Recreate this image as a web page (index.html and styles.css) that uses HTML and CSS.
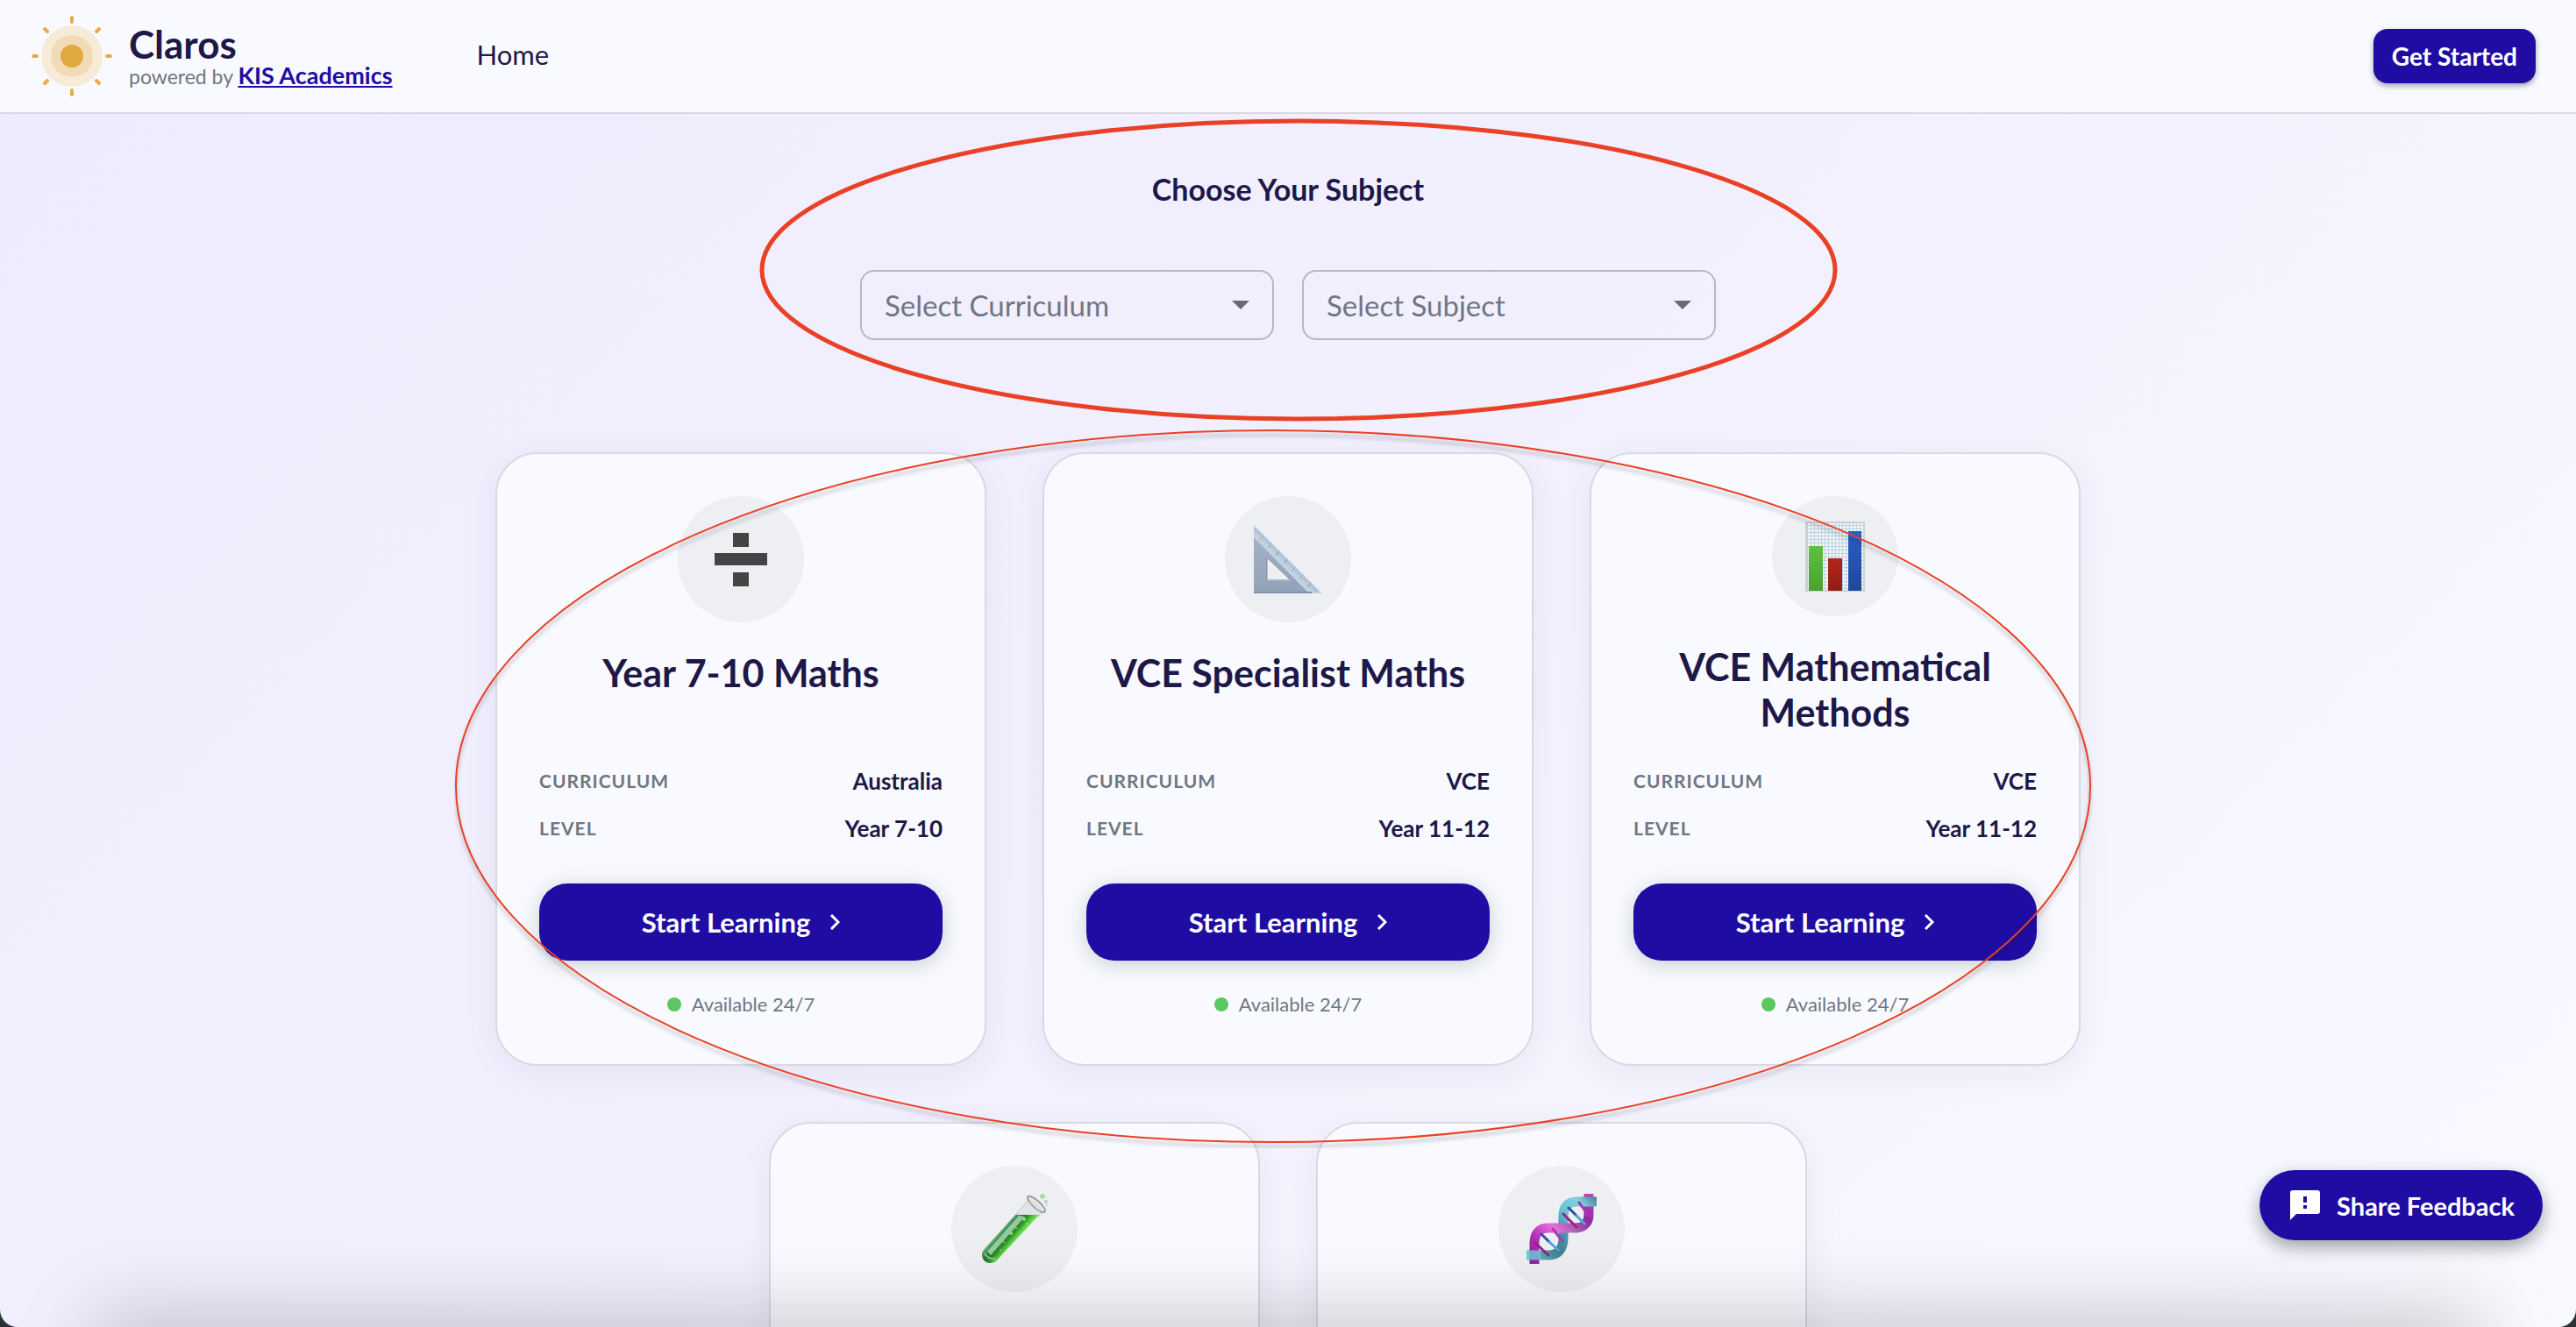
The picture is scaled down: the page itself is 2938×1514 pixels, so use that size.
FILE: index.html
```html
<!DOCTYPE html>
<html lang="en">
<head>
    <meta charset="UTF-8">
    <meta name="viewport" content="width=device-width, initial-scale=1.0">
    <title>Claros</title>
    <link rel="stylesheet" href="styles.css">
</head>
<body>
    <div class="app">
        <header class="header">
            <svg class="logo" viewBox="0 0 94 94" aria-hidden="true">
                <circle cx="47" cy="47" r="35" fill="#f6ebd8"/>
                <circle cx="47" cy="47" r="24" fill="#f3dbb8"/>
                <circle cx="47" cy="47" r="13" fill="#e2a840"/>
                <g stroke="#e6ac48" stroke-width="4" stroke-linecap="round">
                    <path d="M47 3v5M47 86v5M3 47h4M87 47h4M16 16l3 3M75 75l3 3M78 16l-3 3M19 75l-3 3"/>
                </g>
            </svg>
            <div class="brand">
                <div class="brand-name">Claros</div>
                <div class="brand-sub">powered by <a href="#">KIS Academics</a></div>
            </div>
            <nav class="nav">
                <a href="#">Home</a>
            </nav>
            <button class="btn btn-header">Get Started</button>
        </header>

        <main class="main">
            <section class="chooser">
                <h1>Choose Your Subject</h1>
                <div class="selects">
                    <div class="select">
                        <select aria-label="Select Curriculum">
                            <option>Select Curriculum</option>
                        </select>
                        <svg class="arrow" viewBox="0 0 20 10" aria-hidden="true"><path d="M0 0h20L10 10z" fill="#6b6a72"/></svg>
                    </div>
                    <div class="select">
                        <select aria-label="Select Subject">
                            <option>Select Subject</option>
                        </select>
                        <svg class="arrow" viewBox="0 0 20 10" aria-hidden="true"><path d="M0 0h20L10 10z" fill="#6b6a72"/></svg>
                    </div>
                </div>
            </section>

            <section class="cards">
                <article class="card">
                    <div class="card-top">
                        <div class="icon">
                            <svg viewBox="0 0 80 80" aria-hidden="true">
                                <path d="M10 33h60v14H10zM31 10h18v16H31zM31 55h18v16H31z" fill="#444"/>
                            </svg>
                        </div>
                        <h2>Year 7-10 Maths</h2>
                    </div>
                    <dl class="details">
                        <div><dt>Curriculum</dt><dd>Australia</dd></div>
                        <div><dt>Level</dt><dd>Year 7-10</dd></div>
                    </dl>
                    <button class="btn btn-start">Start Learning
                        <svg viewBox="0 0 12 18" aria-hidden="true"><path d="M2 1l8 8-8 8" fill="none" stroke="#fff" stroke-width="3"/></svg>
                    </button>
                    <p class="status">Available 24/7</p>
                </article>

                <article class="card">
                    <div class="card-top">
                        <div class="icon">
                            <svg viewBox="0 0 80 80" aria-hidden="true">
                                <defs>
                                    <linearGradient id="ruler" x1="0" y1="0" x2="0" y2="1">
                                        <stop offset="0" stop-color="#a6b3c4"/>
                                        <stop offset="1" stop-color="#92a2ba"/>
                                    </linearGradient>
                                </defs>
                                <path fill-rule="evenodd" d="M1 12v67h66zM16 38l26 25H16z" fill="url(#ruler)"/>
                                <path d="M1 1v14l60 61 5 3h13z" fill="#c3d2e2"/>
                                <path d="M2 6l71 71" stroke="#94a9c0" stroke-width="4" stroke-dasharray="1 2"/>
                                <path d="M12 13l-4 5M21 22l-4 5M30 31l-4 5M39 40l-4 5M48 49l-4 5M57 58l-4 5M66 67l-4 5" stroke="#8ea3bb"/>
                                <path d="M16 63V38l26 25" fill="none" stroke="#7d8ca3"/>
                                <path d="M16 64h27" stroke="#b9c5d4"/>
                                <path d="M1 78h66" stroke="#7f90a8" stroke-width="2"/>
                            </svg>
                        </div>
                        <h2>VCE Specialist Maths</h2>
                    </div>
                    <dl class="details">
                        <div><dt>Curriculum</dt><dd>VCE</dd></div>
                        <div><dt>Level</dt><dd>Year 11-12</dd></div>
                    </dl>
                    <button class="btn btn-start">Start Learning
                        <svg viewBox="0 0 12 18" aria-hidden="true"><path d="M2 1l8 8-8 8" fill="none" stroke="#fff" stroke-width="3"/></svg>
                    </button>
                    <p class="status">Available 24/7</p>
                </article>

                <article class="card">
                    <div class="card-top">
                        <div class="icon">
                            <svg viewBox="0 0 80 80" aria-hidden="true">
                                <defs>
                                    <pattern id="grid" width="4" height="4" patternUnits="userSpaceOnUse">
                                        <rect width="4" height="4" fill="#f3f5f6"/>
                                        <path d="M0 0h4M0 0v4" stroke="#b9d3e6" stroke-width="2"/>
                                    </pattern>
                                    <linearGradient id="green" x1="0" y1="0" x2="0" y2="1">
                                        <stop offset="0" stop-color="#5cc141"/><stop offset="1" stop-color="#4aa132"/>
                                    </linearGradient>
                                    <linearGradient id="red" x1="0" y1="0" x2="0" y2="1">
                                        <stop offset="0" stop-color="#b3251a"/><stop offset="1" stop-color="#911d13"/>
                                    </linearGradient>
                                    <linearGradient id="blue" x1="0" y1="0" x2="0" y2="1">
                                        <stop offset="0" stop-color="#275fc8"/><stop offset="1" stop-color="#20479a"/>
                                    </linearGradient>
                                </defs>
                                <rect x="6" width="68" height="80" fill="url(#grid)"/>
                                <rect x="7" y="1" width="66" height="78" fill="none" stroke="#cfd1d4" stroke-width="2"/>
                                <rect x="10" y="28" width="16" height="51" fill="url(#green)"/>
                                <rect x="32" y="42" width="16" height="37" fill="url(#red)"/>
                                <rect x="55" y="11" width="15" height="68" fill="url(#blue)"/>
                            </svg>
                        </div>
                        <h2>VCE Mathematical Methods</h2>
                    </div>
                    <dl class="details">
                        <div><dt>Curriculum</dt><dd>VCE</dd></div>
                        <div><dt>Level</dt><dd>Year 11-12</dd></div>
                    </dl>
                    <button class="btn btn-start">Start Learning
                        <svg viewBox="0 0 12 18" aria-hidden="true"><path d="M2 1l8 8-8 8" fill="none" stroke="#fff" stroke-width="3"/></svg>
                    </button>
                    <p class="status">Available 24/7</p>
                </article>

                <article class="card">
                    <div class="card-top">
                        <div class="icon">
                            <svg viewBox="0 0 80 80" aria-hidden="true">
                                <defs>
                                    <linearGradient id="liquid" gradientUnits="userSpaceOnUse" x1="31" y1="35" x2="45" y2="47">
                                        <stop offset="0" stop-color="#5fae74"/>
                                        <stop offset="0.35" stop-color="#256f2a"/>
                                        <stop offset="0.65" stop-color="#2f8a28"/>
                                        <stop offset="1" stop-color="#62dc45"/>
                                    </linearGradient>
                                </defs>
                                <!-- glass -->
                                <path d="M12 70L50 28" stroke="#3c6f4c" stroke-width="18" stroke-linecap="round"/>
                                <path d="M41 25L55 7l18 14-5 5z" fill="#e1e4e6"/>
                                <path d="M55 8L41 24M72 20L67 26" stroke="#c2c6c9"/>
                                <!-- liquid -->
                                <path d="M41 24h27L19 77c-9 6-20-4-14-13z" fill="url(#liquid)"/>
                                <path d="M45 25L9 66l4 4L52 26z" fill="#c4ecd0" opacity="0.7"/>
                                <path d="M6 68c3 5 8 7 13 6" fill="none" stroke="#7ccf92" stroke-width="2"/>
                                <ellipse cx="65" cy="12" rx="13" ry="4" transform="rotate(42 65 12)" fill="#e8eaeb" stroke="#9b9fa1" stroke-width="2"/>
                                <ellipse cx="64" cy="13" rx="9" ry="2" transform="rotate(42 64 13)" fill="#d7e2d8"/>
                                <g fill="#7fe07a">
                                    <circle cx="51" cy="29" r="2"/><circle cx="36" cy="45" r="2"/><circle cx="42" cy="39" r="1"/>
                                    <circle cx="28" cy="55" r="1"/><circle cx="17" cy="62" r="2"/><circle cx="24" cy="64" r="1"/><circle cx="54" cy="34" r="1"/>
                                </g>
                                <g fill="#a6dea6">
                                    <circle cx="72" cy="3" r="3"/><circle cx="76" cy="9" r="2"/><circle cx="77" cy="13" r="1"/>
                                </g>
                            </svg>
                        </div>
                    </div>
                </article>

                <article class="card">
                    <div class="card-top">
                        <div class="icon">
                            <svg viewBox="0 0 80 80" fill="none" aria-hidden="true">
                                <defs>
                                    <linearGradient id="teal" gradientUnits="userSpaceOnUse" x1="80" y1="0" x2="0" y2="80">
                                        <stop offset="0" stop-color="#3f6f84"/>
                                        <stop offset="0.18" stop-color="#7ed3de"/>
                                        <stop offset="0.35" stop-color="#6cc3d2"/>
                                        <stop offset="0.5" stop-color="#4695b3"/>
                                        <stop offset="0.7" stop-color="#43808f"/>
                                        <stop offset="1" stop-color="#74d4df"/>
                                    </linearGradient>
                                    <linearGradient id="pink" gradientUnits="userSpaceOnUse" x1="80" y1="0" x2="0" y2="80">
                                        <stop offset="0" stop-color="#c94fd0"/>
                                        <stop offset="0.25" stop-color="#8d2aa0"/>
                                        <stop offset="0.4" stop-color="#a95fae"/>
                                        <stop offset="0.55" stop-color="#e76fdc"/>
                                        <stop offset="0.75" stop-color="#b52db6"/>
                                        <stop offset="1" stop-color="#8a1d92"/>
                                    </linearGradient>
                                </defs>
                                <path d="M71 0V24C71 34 64 39 56 39" stroke="url(#pink)" stroke-width="11"/>
                                <path d="M80 9H57C47 9 42 15 42 25V50C42 63 36 70 26 70H0" stroke="url(#teal)" stroke-width="11"/>
                                <path d="M58 39H24C14 39 9 46 9 57V80" stroke="url(#pink)" stroke-width="11"/>
                                <path d="M0 70h16" stroke="#6fcfdc" stroke-width="11" opacity="0.8"/>
                                <g stroke-width="3" stroke-linecap="round">
                                    <path d="M48 16L57 25M17 46L26 55" stroke="#2c4ea6"/>
                                    <path d="M57 25L66 34M26 55L36 64" stroke="#4fa3dc"/>
                                    <path d="M42 23L57 38M10 56L25 70" stroke="#93238f"/>
                                    <path d="M60 10L71 25M30 40L41 54" stroke="#a838b4"/>
                                </g>
                            </svg>
                        </div>
                    </div>
                </article>
            </section>
        </main>

        <!-- hand-drawn highlights over the page -->
        <svg class="marks" viewBox="0 0 1870 1180" fill="none" stroke="#ea4025" aria-hidden="true">
            <ellipse cx="963" cy="178" rx="612" ry="170" stroke-width="5"/>
            <ellipse class="mark-thin" cx="934" cy="767" rx="932" ry="406" stroke-width="2"/>
        </svg>

        <button class="btn btn-feedback">
            <svg viewBox="0 0 34 34" aria-hidden="true">
                <path fill-rule="evenodd" d="M3 0h28a3 3 0 0 1 3 3v21a3 3 0 0 1-3 3H7l-7 7V3a3 3 0 0 1 3-3zM15 7v7h4V7zM15 17v4h4v-4z" fill="#fff"/>
            </svg>
            Share Feedback
        </button>
        <div class="bottom-shade"></div>
    </div>
</body>
</html>
```
FILE: styles.css
```css
* {
    box-sizing: border-box;
}

body {
    margin: 0;
    background-color: #2b3236;
    color: #1e1848;
    font-family: Lato, "Open Sans", sans-serif;
}

.app {
    position: relative;
    height: 100vh;
    overflow: hidden;
    background: linear-gradient(135deg, #efebfd 0%, #f2f0fe 50%, #f8faff 100%);
    border-radius: 0 0 20px 20px;
}

.header {
    display: flex;
    align-items: center;
    height: 130px;
    padding: 0 46px 0 35px;
    background-color: #f9faff;
    border-bottom: 2px solid #dad9e1;
}

.logo {
    width: 94px;
    height: 94px;
    margin-right: 18px;
}

.brand {
    padding-top: 4px;
}

.brand-name {
    font-size: 44px;
    font-weight: bold;
    line-height: 40px;
}

.brand-sub {
    font-size: 23px;
    line-height: 32px;
    color: #6f7683;
}

.brand-sub a {
    font-size: 27px;
    font-weight: bold;
    color: #1f0da3;
}

.nav {
    flex: 1;
    margin-left: 96px;
    padding-bottom: 4px;
}

.nav a {
    font-size: 31px;
    color: #1e1848;
    text-decoration: none;
}

.btn {
    display: flex;
    align-items: center;
    justify-content: center;
    border: none;
    background-color: #1f0da3;
    color: white;
    font-family: inherit;
    font-weight: bold;
    cursor: pointer;
}

.btn-header {
    height: 62px;
    padding: 0 21px;
    border-radius: 16px;
    font-size: 28px;
    box-shadow: 0 3px 6px rgba(0, 0, 0, 0.35);
}

.chooser {
    display: flex;
    flex-direction: column;
    align-items: center;
    padding: 64px 0 128px;
}

.chooser h1 {
    margin: 0 0 70px;
    font-size: 34px;
    font-weight: bold;
    line-height: 44px;
}

.selects {
    display: flex;
    gap: 32px;
}

.select {
    display: grid;
    align-items: center;
    width: 472px;
}

.select select,
.select .arrow {
    grid-area: 1 / 1;
}

.select select {
    appearance: none;
    width: 100%;
    height: 80px;
    padding: 0 26px;
    border: 2px solid #b8b6c3;
    border-radius: 16px;
    background: transparent;
    color: #6f7683;
    font-family: inherit;
    font-size: 33px;
}

.arrow {
    width: 20px;
    height: 10px;
    margin-right: 28px;
    justify-self: end;
    pointer-events: none;
}

.cards {
    display: flex;
    flex-wrap: wrap;
    justify-content: center;
    gap: 64px;
    max-width: 1808px;
    margin: 0 auto;
}

.card {
    width: 560px;
    min-height: 700px;
    padding: 48px;
    background-color: #f9faff;
    border: 2px solid #dad9e1;
    border-radius: 48px;
    box-shadow: 0 8px 40px rgba(30, 24, 72, 0.06);
}

.card-top {
    display: flex;
    flex-direction: column;
    align-items: center;
    height: 273px;
    margin-bottom: 33px;
}

.icon {
    display: flex;
    align-items: center;
    justify-content: center;
    width: 144px;
    height: 144px;
    min-height: 0;
    border-radius: 50%;
    background-color: #eeeff3;
}

.icon svg {
    width: 80px;
    height: 80px;
}

.card h2 {
    margin: 32px 0 0;
    font-size: 43px;
    font-weight: bold;
    line-height: 52px;
    text-align: center;
}

.details {
    display: flex;
    flex-direction: column;
    gap: 16px;
    margin: 0 0 44px;
}

.details div {
    display: flex;
    justify-content: space-between;
    align-items: center;
    line-height: 38px;
}

.details dt {
    font-size: 21px;
    font-weight: bold;
    letter-spacing: 1px;
    text-transform: uppercase;
    color: #6f7683;
}

.details dd {
    margin: 0;
    font-size: 26px;
    font-weight: bold;
}

.btn-start {
    width: 100%;
    height: 88px;
    gap: 22px;
    border-radius: 32px;
    font-size: 31px;
    box-shadow: 0 4px 24px rgba(0, 30, 30, 0.2);
}

.btn-start svg {
    width: 12px;
    height: 18px;
}

.status {
    display: flex;
    align-items: center;
    justify-content: center;
    gap: 12px;
    margin: 34px 0 0;
    font-size: 22px;
    line-height: 32px;
    color: #6f7683;
}

.status::before {
    content: "";
    width: 16px;
    height: 16px;
    border-radius: 50%;
    background-color: #5bc75f;
}

.marks {
    position: absolute;
    top: 130px;
    left: 50%;
    width: 1870px;
    height: 1180px;
    margin-left: -951px;
    pointer-events: none;
}

.mark-thin {
    filter: drop-shadow(0 5px 2px rgba(0, 0, 0, 0.25));
}

.btn-feedback {
    position: absolute;
    right: 38px;
    bottom: 99px;
    height: 80px;
    gap: 19px;
    padding: 0 32px 0 35px;
    border-radius: 40px;
    font-size: 29px;
    box-shadow: 0 8px 20px rgba(0, 0, 0, 0.35);
}

.btn-feedback svg {
    width: 34px;
    height: 34px;
}

/* soft shadow along the bottom edge of the window */
.bottom-shade {
    position: absolute;
    left: 120px;
    right: 120px;
    bottom: -60px;
    height: 60px;
    box-shadow: 0 0 90px 10px rgba(0, 0, 0, 0.22);
    pointer-events: none;
}
```
